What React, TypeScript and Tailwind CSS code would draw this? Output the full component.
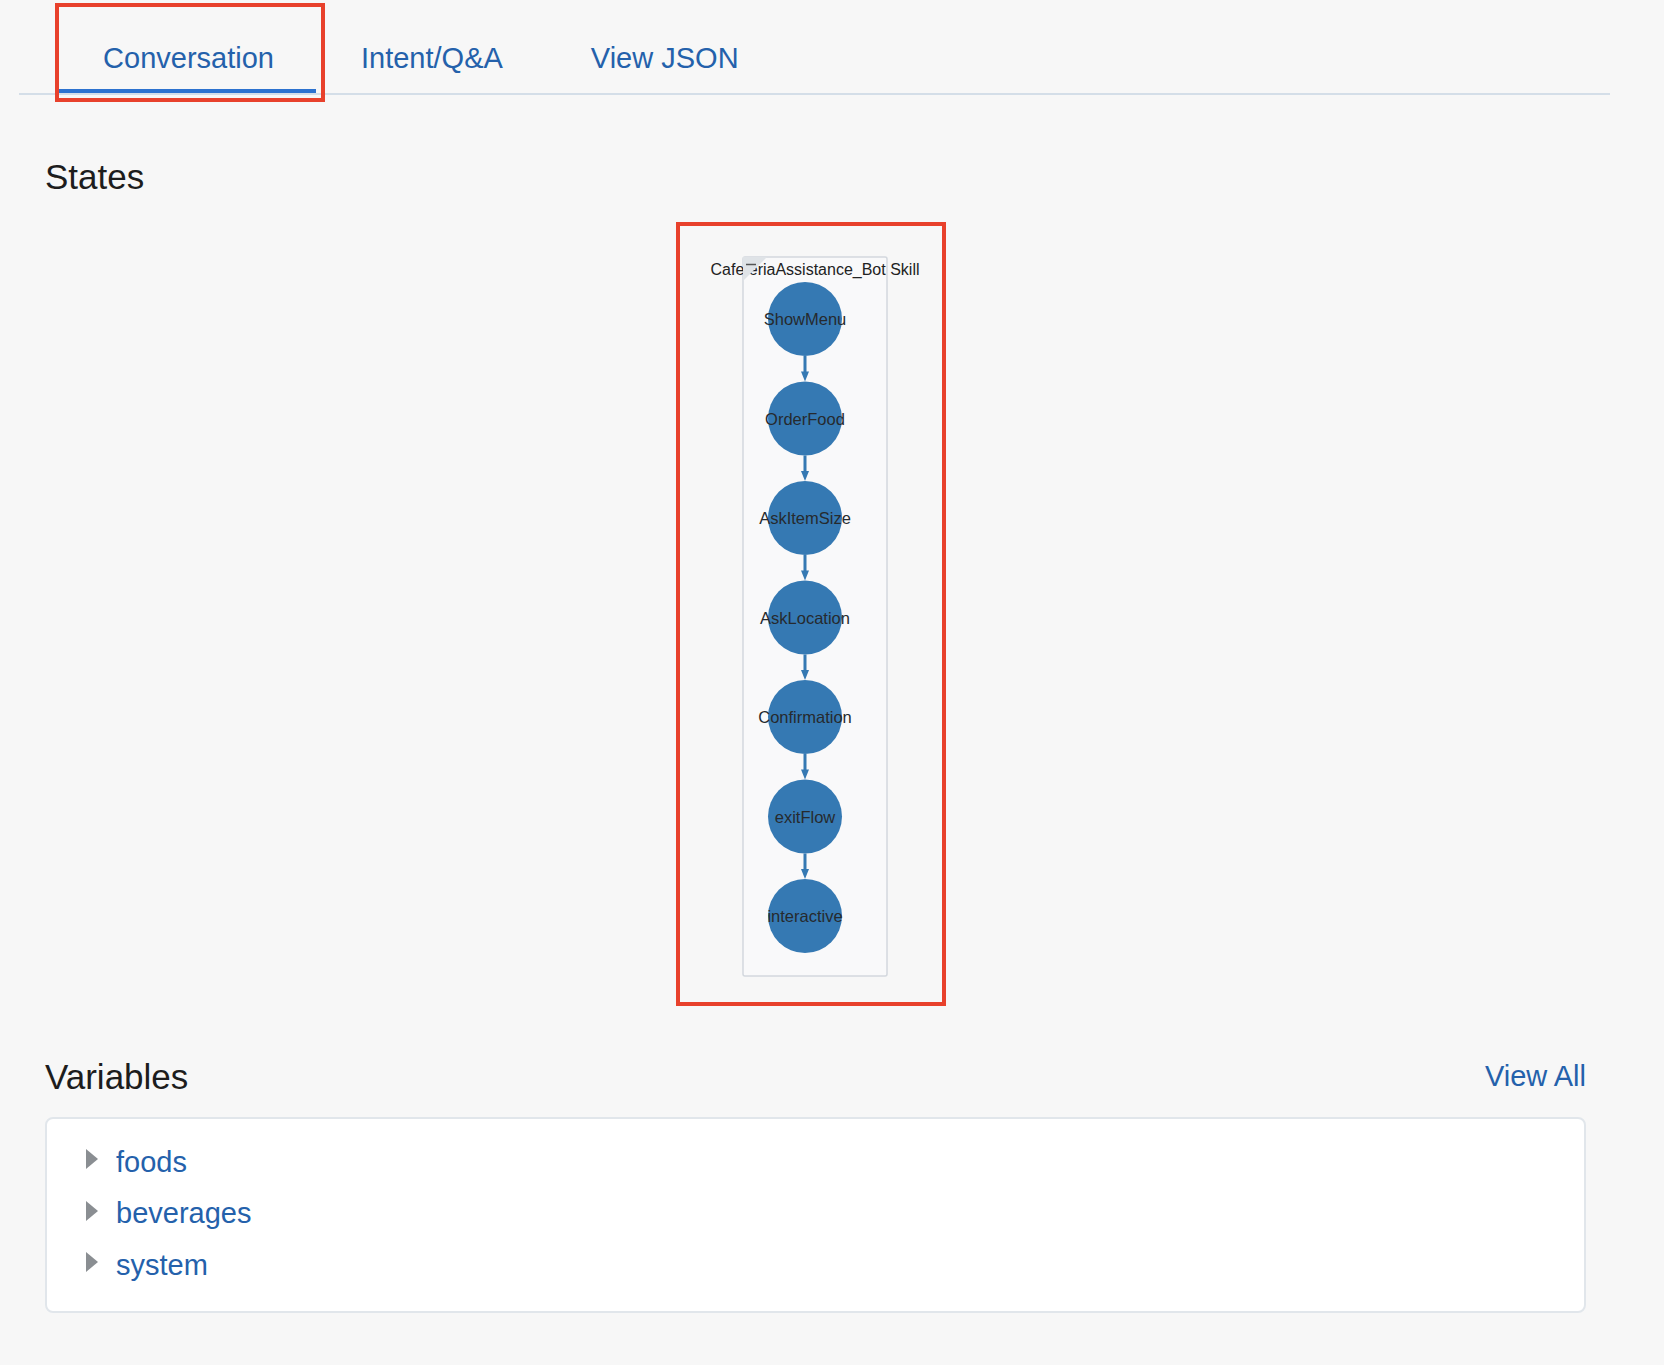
import { FC } from 'react'

const states = ['ShowMenu', 'OrderFood', 'AskItemSize', 'AskLocation', 'Confirmation', 'exitFlow', 'interactive']
const variables = ['foods', 'beverages', 'system']

const NODE_X = 125
const NODE_TOP = 93
const NODE_STEP = 99.5
const R = 37

const Tabs: FC = () => {
  return (
    <div className="relative ml-[19px] flex h-[95px] w-[1591px] border-b-2 border-[#d4dee8] pl-[40px]">
      <div className="flex w-[257px] flex-col items-center pt-[42px]">
        <span className="ml-[2px] text-[29px] leading-[32px] text-[#2461ab]">Conversation</span>
        <div className="mt-[15px] h-[5px] w-full bg-[#2c72cf]" />
      </div>
      <div className="ml-[45px] pt-[42px]">
        <span className="text-[29px] leading-[32px] text-[#2461ab]">Intent/Q&amp;A</span>
      </div>
      <div className="ml-[88px] pt-[42px]">
        <span className="text-[29px] leading-[32px] text-[#2461ab]">View JSON</span>
      </div>

      {/* annotation box around the active tab */}
      <div className="pointer-events-none absolute left-[36px] top-[3px] h-[99px] w-[270px] border-4 border-[#e8412c]" />
    </div>
  )
}

const FlowDiagram: FC = () => {
  return (
    <div className="ml-[631px] mt-[25px] h-[784px] w-[270px] border-4 border-[#e8412c]">
      <svg width="262" height="776" viewBox="0 0 262 776" className="block">
        <rect x="63" y="31" width="144" height="719" rx="2" fill="#f9f9fa" stroke="#d3d8de" strokeWidth="1.5" />
        <text
          x="135"
          y="49"
          textAnchor="middle"
          fontFamily="'Liberation Sans', Arial, sans-serif"
          fontSize="16"
          fill="#222"
        >
          CafeteriaAssistance_Bot Skill
        </text>
        <polygon points="63,31 87,31 63,55" fill="#dfe3e7" />
        <line x1="66" y1="38.5" x2="76" y2="38.5" stroke="#555" strokeWidth="1.5" />

        {states.map((name, i) => {
          const cy = NODE_TOP + i * NODE_STEP
          const next = cy + NODE_STEP
          return (
            <g key={name}>
              {i < states.length - 1 && (
                <>
                  <line x1={NODE_X} y1={cy + R} x2={NODE_X} y2={next - R - 8} stroke="#3579b3" strokeWidth="3" />
                  <polygon
                    points={`${NODE_X - 4},${next - R - 10} ${NODE_X + 4},${next - R - 10} ${NODE_X},${next - R}`}
                    fill="#3579b3"
                  />
                </>
              )}
              <circle cx={NODE_X} cy={cy} r={R} fill="#3579b3" />
              <text
                x={NODE_X}
                y={cy + 6}
                textAnchor="middle"
                fontFamily="'Liberation Sans', Arial, sans-serif"
                fontSize="16.5"
                fill="#262a2e"
              >
                {name}
              </text>
            </g>
          )
        })}
      </svg>
    </div>
  )
}

const Variables: FC = () => {
  return (
    <div className="mt-[51px]">
      <div className="flex items-end justify-between">
        <h2 className="text-[35px] leading-[40px] font-normal text-[#1d1d1d]">Variables</h2>
        <a className="mb-[5px] text-[29px] leading-[32px] text-[#2461ab]">View All</a>
      </div>
      <div className="mt-[20px] rounded-lg border-2 border-[#e1e6eb] bg-white pb-[20px] pl-[39px] pt-[17.5px]">
        {variables.map((v) => (
          <div key={v} className="flex h-[51.5px] items-center">
            <svg width="12" height="20" viewBox="0 0 12 20" className="-mt-[6px] mr-[18px] shrink-0">
              <polygon points="0,0 12,10 0,20" fill="#8a8e92" />
            </svg>
            <span className="text-[29px] leading-[51.5px] text-[#2461ab]">{v}</span>
          </div>
        ))}
      </div>
    </div>
  )
}

const App: FC = () => {
  return (
    <div className="min-h-[1365px] bg-[#f7f7f7] font-['Liberation_Sans',Arial,sans-serif]">
      <Tabs />
      <div className="w-[1586px] pl-[45px]">
        <h2 className="mt-[62px] text-[35px] leading-[40px] font-normal text-[#1d1d1d]">States</h2>
        <FlowDiagram />
        <Variables />
      </div>
    </div>
  )
}

export default App
